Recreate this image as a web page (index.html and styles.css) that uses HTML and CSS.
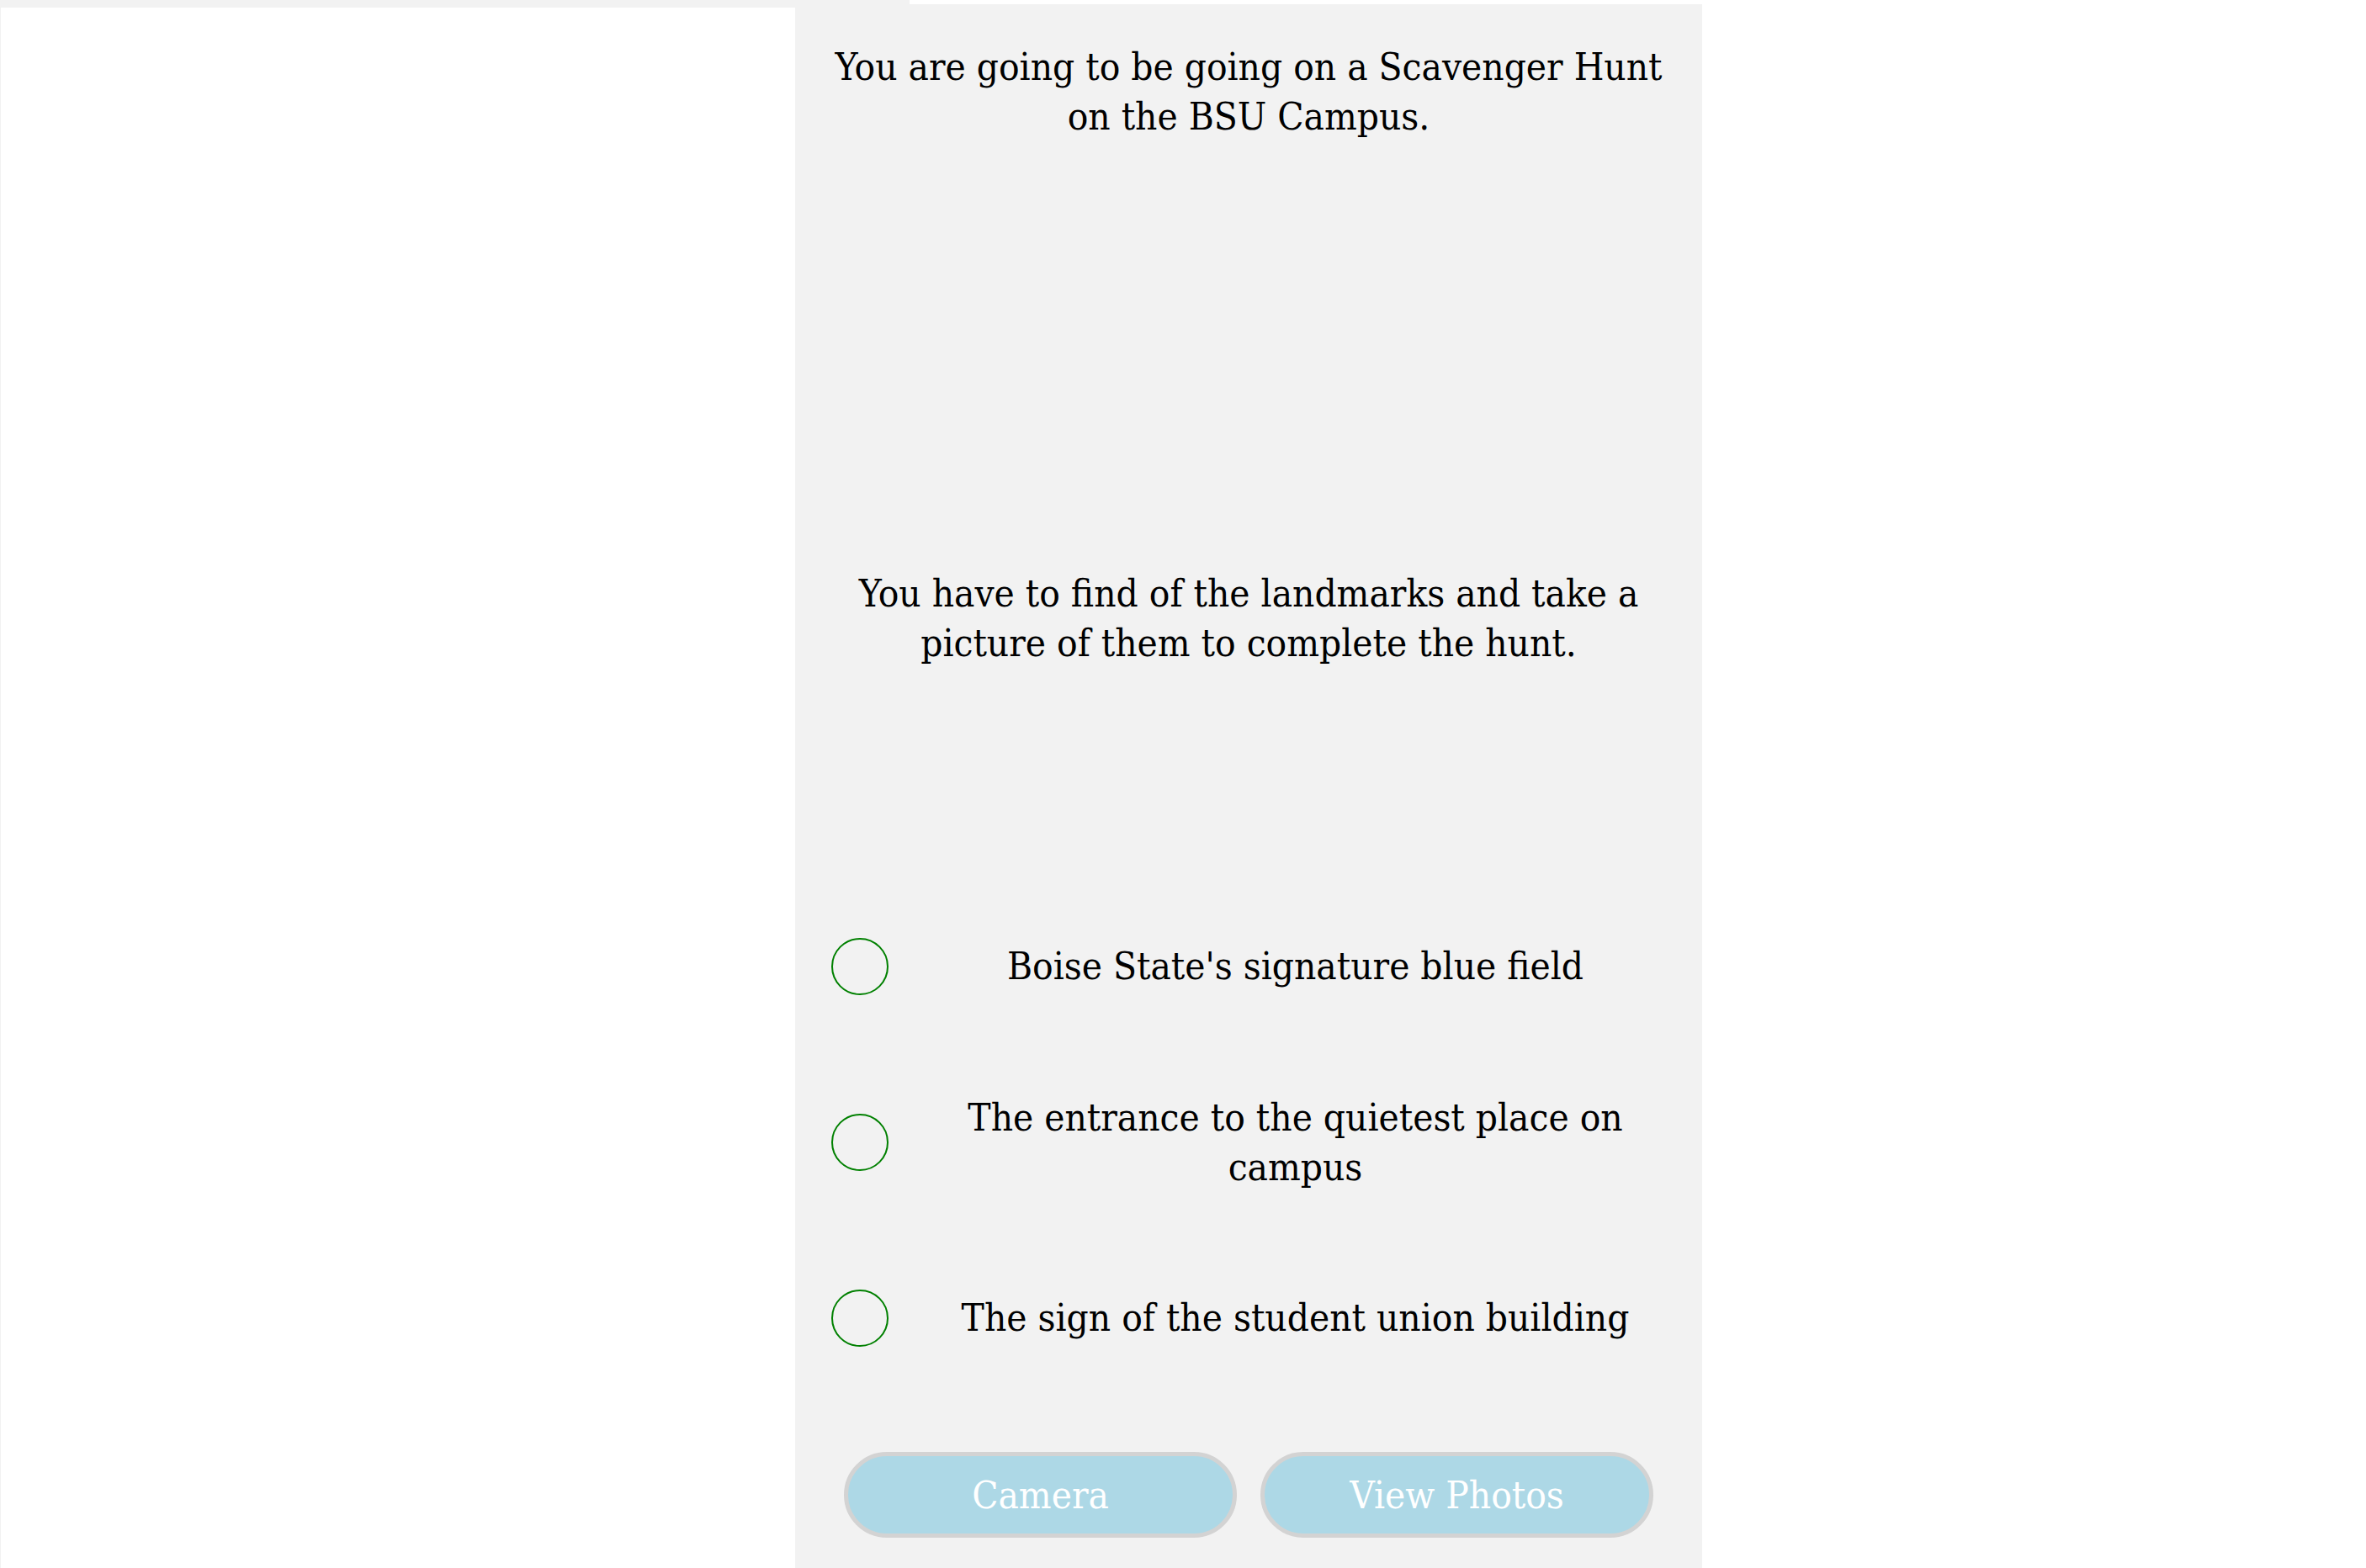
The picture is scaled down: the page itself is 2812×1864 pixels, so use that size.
FILE: index.html
```html
<!DOCTYPE html>
<html lang="en">
<head>
<meta charset="utf-8">
<title>Scavenger Hunt</title>
<link rel="stylesheet" href="styles.css">
</head>
<body>
<div class="top-strip"></div>
<main class="panel">
  <p class="intro">You are going to be going on a Scavenger Hunt on the BSU Campus.</p>
  <p class="intro second">You have to find of the landmarks and take a picture of them to complete the hunt.</p>
  <ul class="list">
    <li class="item">
      <span class="check"></span>
      <span class="label">Boise State's signature blue field</span>
    </li>
    <li class="item">
      <span class="check"></span>
      <span class="label">The entrance to the quietest place on campus</span>
    </li>
    <li class="item">
      <span class="check"></span>
      <span class="label">The sign of the student union building</span>
    </li>
  </ul>
  <div class="buttons">
    <button class="btn">Camera</button>
    <button class="btn">View Photos</button>
  </div>
</main>
</body>
</html>
```
FILE: styles.css
```css
html, body {
  margin: 0;
  padding: 0;
  background: #ffffff;
}
body {
  position: relative;
  height: 100vh;
  overflow: hidden;
  border-left: 1px solid #f2f2f2;
  box-sizing: border-box;
  font-family: "Roboto Slab", "DejaVu Serif Condensed", "DejaVu Serif", serif;
  font-stretch: condensed;
  color: #000;
}
.top-strip {
  position: absolute;
  left: 0;
  top: 0;
  width: 1080px;
  height: 9px;
  background: #f2f2f2;
}
.panel {
  margin: 5px 0 0 944px;
  width: 1078px;
  height: calc(100vh - 5px);
  background: #f2f2f2;
  box-sizing: border-box;
  padding: 45px 40px 0;
  display: flex;
  flex-direction: column;
}
.intro {
  margin: 0;
  font-size: 45.5px;
  line-height: 59px;
  text-align: center;
}
.intro.second {
  margin-top: 508px;
}
.list {
  list-style: none;
  margin: 250px 0 0 -40px;
  padding: 0;
  width: 1078px;
}
.item {
  height: 209px;
  display: flex;
  align-items: center;
}
.check {
  flex: none;
  width: 64px;
  height: 64px;
  margin-left: 43px;
  border: 2px solid #008000;
  border-radius: 50%;
}
.label {
  flex: 1;
  margin: 0 24px;
  font-size: 45.5px;
  line-height: 59px;
  text-align: center;
}
.buttons {
  margin-top: 55px;
  display: flex;
  justify-content: center;
  gap: 28px;
}
.btn {
  width: 467px;
  height: 102px;
  border: 5px solid #d3d3d3;
  border-radius: 51px;
  background: #add8e6;
  color: #ffffff;
  font-family: inherit;
  font-stretch: condensed;
  font-size: 45.5px;
  padding: 0;
}
```
